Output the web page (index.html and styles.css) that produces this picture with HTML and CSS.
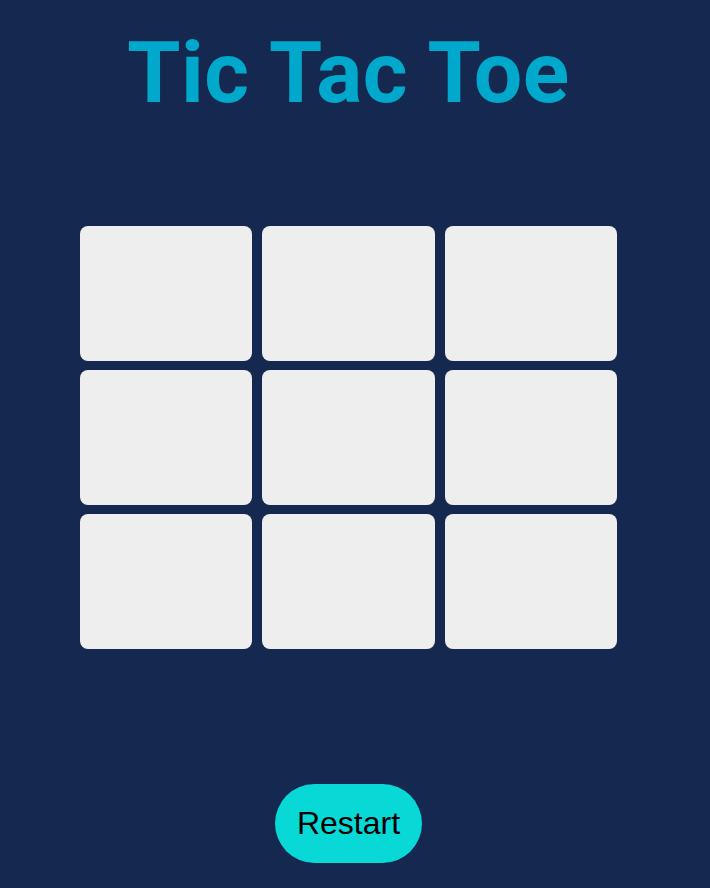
FILE: index.html
```html
<!DOCTYPE html>
<html>
<head>
<meta charset="utf-8">
<link rel="stylesheet" href="styles.css">
</head>
<body>
<main class="app">
  <h1 class="title">Tic Tac Toe</h1>
  <div class="board">
    <div class="cell"></div><div class="cell"></div><div class="cell"></div>
    <div class="cell"></div><div class="cell"></div><div class="cell"></div>
    <div class="cell"></div><div class="cell"></div><div class="cell"></div>
  </div>
  <button class="restart">Restart</button>
</main>
</body>
</html>
```
FILE: styles.css
```css
html, body {
  margin: 0;
  padding: 0;
  background: #142850;
  height: 100%;
}
.app {
  width: 697px;
  display: flex;
  flex-direction: column;
  align-items: center;
}
.title {
  margin: 23px 0 0;
  font-family: Roboto, "Liberation Sans", sans-serif;
  font-weight: 700;
  font-size: 86px;
  line-height: 100px;
  letter-spacing: 0.4px;
  color: #00a8cc;
}
.board {
  margin-top: 103px;
  display: grid;
  grid-template-columns: repeat(3, 172.5px);
  grid-template-rows: repeat(3, 135px);
  gap: 9px 10px;
}
.cell {
  background: #eeeeee;
  border-radius: 8px;
}
.restart {
  margin-top: 135px;
  width: 147px;
  height: 79px;
  border: none;
  border-radius: 40px;
  background: #08d9d6;
  color: #000;
  font-family: "Liberation Sans", Arial, sans-serif;
  font-size: 32px;
  padding: 0;
}
```
